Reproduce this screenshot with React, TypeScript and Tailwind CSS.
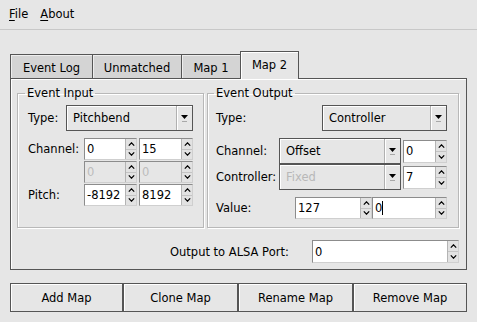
const font = { fontFamily: '"DejaVu Sans", "Liberation Sans", sans-serif' };

function ComboArrow() {
  return (
    <svg width="9" height="12" viewBox="0 0 9 12">
      <path d="M1 3h7l-3.5 4z" fill="#000" />
      <rect x="2" y="9" width="5" height="1" fill="#a8a8a8" />
    </svg>
  );
}

function Combo({ text, w, disabled }: { text: string; w: string; disabled?: boolean }) {
  return (
    <div className={`${w} h-[26px] flex border border-[#555] bg-[#e6e6e6]`}>
      <div
        className={`flex-1 flex items-center pl-[6px] shadow-[inset_1px_1px_0_#fff] ${
          disabled ? 'text-[#b8b8b8]' : 'text-black'
        }`}
      >
        {text}
      </div>
      <div className="w-[16px] flex items-center justify-center border-l border-[#b0b0b0] shadow-[inset_1px_1px_0_#fff]">
        <ComboArrow />
      </div>
    </div>
  );
}

function SpinButtons() {
  return (
    <div className="w-[11px] flex flex-col border-l border-[#b4b4b4] bg-[#e2e2e2]">
      <div className="flex-1 flex items-center justify-center border-b border-[#c4c4c4]">
        <svg width="7" height="4" viewBox="0 0 7 4">
          <path d="M0.8 3.6L3.5 0.8L6.2 3.6" stroke="#000" strokeWidth="1.2" fill="none" />
        </svg>
      </div>
      <div className="flex-1 flex items-center justify-center">
        <svg width="7" height="4" viewBox="0 0 7 4">
          <path d="M0.8 0.4L3.5 3.2L6.2 0.4" stroke="#000" strokeWidth="1.2" fill="none" />
        </svg>
      </div>
    </div>
  );
}

function Spin({
  value,
  w,
  h = 'h-[22px]',
  disabled,
  caret,
}: {
  value: string;
  w: string;
  h?: string;
  disabled?: boolean;
  caret?: boolean;
}) {
  return (
    <div
      className={`${w} ${h} flex border border-[#8c8c8c] border-r-[#cfcfcf] border-b-[#cfcfcf] ${
        disabled ? 'bg-[#e6e6e6]' : 'bg-white'
      }`}
    >
      <div
        className={`flex-1 flex items-center pl-[2px] ${
          disabled ? 'text-[#bcbcbc]' : 'text-black'
        }`}
      >
        {value}
        {caret && <span className="inline-block w-px h-[14px] bg-black" />}
      </div>
      <SpinButtons />
    </div>
  );
}

const tabs = [
  { name: 'Event Log', w: 'w-[82px]' },
  { name: 'Unmatched', w: 'w-[89px]' },
  { name: 'Map 1', w: 'w-[59px]' },
];

const buttons = [
  { name: 'Add Map', w: 'w-[113px]' },
  { name: 'Clone Map', w: 'w-[115px]' },
  { name: 'Rename Map', w: 'w-[115px]' },
  { name: 'Remove Map', w: 'w-[114px]' },
];

export default function App() {
  return (
    <div className="w-[477px] h-[322px] bg-[#e6e6e6] text-[11.5px] leading-[14px] text-black overflow-hidden" style={font}>
      {/* menu bar */}
      <div className="h-[30px] flex items-center pl-[9px] gap-[12px] border-b border-[#c8c8c8] pb-[1px]">
        <span>
          <span className="underline underline-offset-2">F</span>ile
        </span>
        <span>
          <span className="underline underline-offset-2">A</span>bout
        </span>
      </div>

      <div className="px-[10px] pt-[21px]">
        {/* tabs */}
        <div className="flex items-end h-[27px] relative z-10">
          {tabs.map((t) => (
            <div
              key={t.name}
              className={`${t.w} h-[24px] flex items-center justify-center pt-[3px] border-t border-l border-[#555] bg-[#d4d4d4] shadow-[inset_1px_1px_0_#eee]`}
            >
              {t.name}
            </div>
          ))}
          <div className="w-[59px] h-[28px] -mb-px flex items-center justify-center pb-[2px] border-t border-l border-r border-[#555] bg-[#e6e6e6] shadow-[inset_1px_1px_0_#fff]">
            Map 2
          </div>
        </div>

        {/* panel */}
        <div className="w-[457px] h-[192px] border border-[#555] shadow-[inset_1px_1px_0_#fff]">
          <div className="flex gap-[3px] pl-[6px] pt-[7px]">
            <fieldset className="w-[187px] h-[142px] border border-[#b8b8b8] shadow-[inset_1px_1px_0_#fff,1px_1px_0_#fff] pl-[10px] pt-[5px]">
              <legend className="-ml-[3px] px-[2px]">Event Input</legend>
              <div className="flex items-center h-[26px]">
                <span className="w-[38px]">Type:</span>
                <Combo text="Pitchbend" w="w-[127px]" />
              </div>
              <div className="flex items-center mt-[7px]">
                <span className="w-[56px]">Channel:</span>
                <Spin value="0" w="w-[53px]" />
                <div className="w-[2px]" />
                <Spin value="15" w="w-[54px]" />
              </div>
              <div className="flex items-center mt-[1px] pl-[56px]">
                <Spin value="0" w="w-[53px]" disabled />
                <div className="w-[2px]" />
                <Spin value="0" w="w-[54px]" disabled />
              </div>
              <div className="flex items-center mt-[1px]">
                <span className="w-[56px]">Pitch:</span>
                <Spin value="-8192" w="w-[53px]" />
                <div className="w-[2px]" />
                <Spin value="8192" w="w-[54px]" />
              </div>
            </fieldset>

            <fieldset className="w-[252px] h-[142px] border border-[#b8b8b8] shadow-[inset_1px_1px_0_#fff,1px_1px_0_#fff] pl-[8px] pt-[5px]">
              <legend className="-ml-[2px] px-[2px]">Event Output</legend>
              <div className="flex items-center h-[26px]">
                <span className="w-[106px]">Type:</span>
                <Combo text="Controller" w="w-[125px]" />
              </div>
              <div className="flex items-center mt-[7px]">
                <span className="w-[63px]">Channel:</span>
                <Combo text="Offset" w="w-[122px]" />
                <div className="w-[2px]" />
                <Spin value="0" w="w-[44px]" h="h-[23px]" />
              </div>
              <div className="flex items-center">
                <span className="w-[63px]">Controller:</span>
                <Combo text="Fixed" w="w-[122px]" disabled />
                <div className="w-[2px]" />
                <Spin value="7" w="w-[44px]" h="h-[23px]" />
              </div>
              <div className="flex items-center mt-[7px]">
                <span className="w-[79px]">Value:</span>
                <Spin value="127" w="w-[77px]" />
                <Spin value="0" w="w-[75px]" caret />
              </div>
            </fieldset>
          </div>

          <div className="flex items-center mt-[12px] pl-[159px]">
            <span className="w-[142px]">Output to ALSA Port:</span>
            <Spin value="0" w="w-[147px]" h="h-[23px]" />
          </div>
        </div>

        {/* buttons */}
        <div className="flex mt-[13px]">
          {buttons.map((b) => (
            <div
              key={b.name}
              className={`${b.w} h-[29px] flex items-center justify-center border border-[#555] bg-[#e6e6e6] shadow-[inset_1px_1px_0_#fff]`}
            >
              {b.name}
            </div>
          ))}
        </div>
      </div>
    </div>
  );
}
